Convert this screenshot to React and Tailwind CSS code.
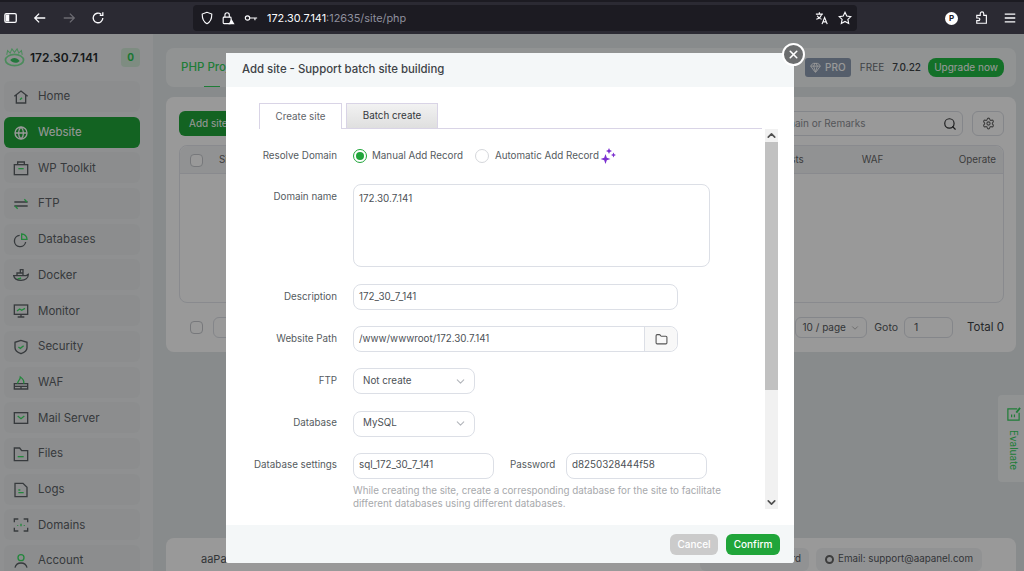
import { ChevronDown, ChevronUp, Folder, Search, Settings, Gem, X } from 'lucide-react'

const GREEN = '#3ce065'

// nav icons: dark outline with one green accent, same as the panel's own set
const NAV_ICONS = {
  Home: <><path d="M2 11 12 3l10 8M5 9v12h14V9" /><path d="m10.500 16 3-3" stroke={GREEN} /></>,
  Website: <><circle cx="12" cy="12" r="9" /><path d="M3 12h18M12 3c-5 5-5 13 0 18M12 3c5 5 5 13 0 18" /></>,
  'WP Toolkit': <><rect x="2" y="7" width="20" height="15" /><path d="M7 7V3h10v4" /><path d="M8 13h8" stroke={GREEN} /></>,
  FTP: <><path d="M2 9h20M2 15h20" /><path d="m17 5 4 4" stroke={GREEN} /><path d="m7 19-4-4" stroke={GREEN} /></>,
  Databases: <><path d="M10 5a8.500 8.500 0 1 0 9 10" /><path d="M13 3a8 8 0 0 1 8 8h-8z" stroke={GREEN} /></>,
  Docker: <><path d="M1 13h18c1 0 2-1 4-2 0 6-5 9-11 9-6 0-10-2-11-7z" /><path d="M6 13V9h5V4h4v9M11 9h4" /><path d="M7 17c2 1 4 0 5-1" stroke={GREEN} /></>,
  Monitor: <><rect x="2" y="3" width="20" height="14" /><path d="M12 17v4M7 21h10" /><path d="m6 12 4-3 3 2 5-3" stroke={GREEN} /></>,
  Security: <><path d="M12 2 3 5v8c0 4 4 7 9 9 5-2 9-5 9-9V5z" /><path d="m8 12 3 2 5-4" stroke={GREEN} /></>,
  WAF: <><path d="M2 13h20v8H2zM2 17h20M12 17v4" /><path d="M7 13c-1-4 4-5 4-10 3 2 6 6 5 10" stroke={GREEN} /></>,
  'Mail Server': <><rect x="2" y="4" width="20" height="16" /><path d="m7 9 5 4 5-4" stroke={GREEN} /></>,
  Files: <><path d="M2 3h8l3 4h9v15H2z" /><path d="M7 16h9" stroke={GREEN} /></>,
  Logs: <><path d="M3 2h12l6 6v14H3z" /><path d="M8 12h3M8 16h8" stroke={GREEN} /></>,
  Domains: <><path d="M2 8V3h6M16 3h6v5M22 16v5h-6M8 21H2v-5" /><path d="M7 12v1M12 10v4M17 12v1" stroke={GREEN} /></>,
  Account: <><path d="M3 22c1-4 4-7 9-7s8 3 9 7" /><circle cx="12" cy="7" r="4.500" stroke={GREEN} /></>,
}
const NAV = Object.keys(NAV_ICONS)

function NavIcon({ name, className }) {
  return (
    <svg viewBox="0 0 24 24" fill="none" stroke="currentColor" strokeWidth="2" className={className}>
      {NAV_ICONS[name]}
    </svg>
  )
}

function Sidebar() {
  return (
    <aside className="w-[153px] shrink-0 bg-[#eef1f2] pl-1 pr-[13px] flex flex-col">
      <div className="h-[47px] shrink-0 flex items-center">
        <svg viewBox="0 0 24 22" className="w-[21px] h-[19px] mr-[5px] shrink-0">
          <ellipse cx="12" cy="14" rx="10.500" ry="6.500" fill="none" stroke="#7fe89a" strokeWidth="2" />
          <path d="M7 14c3-4 8-3 11 1-3 3-8 3-11-1z" fill="#3cc765" />
          <path d="M3 8 4 3l3 3 2-5 3 4 3-4 2 5 3-3 1 5" fill="none" stroke="#7fe89a" strokeWidth="1.200" />
        </svg>
        <span className="text-[12px] font-semibold text-[#262a2e]">172.30.7.141</span>
        <span className="ml-auto w-[19px] h-[19px] rounded bg-[#d3ead8] text-[#2cc653] text-[10px] font-bold grid place-items-center">0</span>
      </div>
      <nav className="flex flex-col gap-[4.700px]">
        {NAV.map(name => (
          <div
            key={name}
            className={`h-[31px] shrink-0 rounded-md flex items-center pl-[9px] pt-[1px] gap-[9px] text-[11.500px] ${name === 'Website' ? 'bg-[#20a53a] text-white' : 'bg-[#e9eced] text-[#5c6166]'}`}
          >
            <NavIcon name={name} className="w-[16px] h-[16px] shrink-0" />
            {name}
          </div>
        ))}
      </nav>
    </aside>
  )
}

function Background() {
  return (
    <main className="flex-1 min-w-0 bg-[#e3e8e9] pt-[14px] pl-[13px] pr-[8px] flex flex-col">
      <div className="h-[39px] shrink-0 rounded-lg bg-[#f2f5f6] flex items-center pl-[15px] pr-[12px] text-[10px]">
        <span className="relative h-full flex items-center text-[#35d05c] font-medium text-[11.500px]">
          PHP Project
          <span className="absolute bottom-0 left-[23px] w-[16px] h-[1.500px] bg-[#35d05c]" />
        </span>
        <span className="ml-auto w-[46px] h-[19px] rounded-[3px] bg-[#8e9db2] text-white flex items-center justify-center gap-1 font-medium"><Gem size={11} />PRO</span>
        <span className="ml-[9px] text-[#6a6f74]">FREE</span>
        <span className="ml-[8px] text-[#3e4347] font-medium">7.0.22</span>
        <span className="ml-[7px] w-[76px] h-[19px] rounded-lg bg-[#20bb44] text-white grid place-items-center">Upgrade now</span>
      </div>

      <section className="mt-[10px] h-[255px] shrink-0 rounded-lg bg-white pl-[13px] pr-[12px] pt-[13px]">
        <div className="h-[26px] pt-[1px] flex items-center">
          <span className="w-[70px] h-[25px] rounded-md bg-[#20a53a] text-white text-[10px] pl-[10px] flex items-center">Add site</span>
          <div className="ml-auto w-[198px] h-[25px] rounded-md border border-[#dcdfe6] flex items-center justify-between pl-[7px] pr-[5px] text-[#8d9095] text-[10px]">
            <span>Domain or Remarks</span><Search size={14} className="text-[#303133]" />
          </div>
          <span className="ml-[9px] w-[32px] h-[25px] rounded-md border border-[#dcdfe6] grid place-items-center text-[#666]"><Settings size={13} /></span>
        </div>
        <div className="mt-[9px] h-[158px] rounded-lg border border-[#e4e7ed]">
          <div className="h-[28px] pt-[1px] bg-[#f2f4f6] rounded-t-lg border-b border-[#e4e7ed] flex items-center pl-[10px] pr-[7px] text-[9.800px] text-[#666]">
            <span className="w-[13px] h-[13px] border border-[#c6c9ce] rounded-sm bg-white" />
            <span className="ml-[16px]">Site name</span>
            <span className="ml-[496px]">Requests</span>
            <span className="ml-[58px]">WAF</span>
            <span className="ml-auto">Operate</span>
          </div>
        </div>
        <div className="mt-[14px] h-[21px] flex items-center text-[10.500px] text-[#55595d]">
          <span className="ml-[11px] w-[13px] h-[13px] border border-[#c6c9ce] rounded-sm" />
          <span className="ml-[10px] w-[60px] h-[21px] rounded-md border border-[#dcdfe6]" />
          <span className="ml-auto w-[72px] h-[21px] rounded-md border border-[#dcdfe6] flex items-center justify-center gap-1 text-[10px]">10 / page<ChevronDown size={10} className="text-[#aaa]" /></span>
          <span className="ml-[7px]">Goto</span>
          <span className="ml-[6px] w-[49px] h-[21px] rounded-md border border-[#dcdfe6] pl-[9px] flex items-center">1</span>
          <span className="ml-[14px] text-[11.500px] text-[#3e4347]">Total 0</span>
        </div>
      </section>

      <footer className="mt-[186px] h-[44px] shrink-0 rounded-t-lg bg-white flex items-center pl-[35px] pr-[34px] pb-[2px] text-[9.800px] text-[#55595d]">
        <span className="text-[11px]">aaPanel Linux</span>
        <span className="ml-auto rounded-md bg-[#f2f4f6] pl-[24px] pr-[8px] h-[23px] mr-[7px] flex items-center">Forum Password</span>
        <span className="rounded-md bg-[#f2f4f6] h-[23px] pl-[9px] pr-[9px] flex items-center gap-[4px]">
          <span className="w-[9px] h-[9px] rounded-full border-2 border-[#666]" />
          Email: support@aapanel.com
        </span>
      </footer>
    </main>
  )
}

function Field({ label, children }) {
  return (
    <div className="flex items-center">
      <span className="w-[111px] shrink-0 text-right text-[9.800px] text-[#555b60] mr-[16px]">{label}</span>
      {children}
    </div>
  )
}

function TextBox({ value, className }) {
  return (
    <div className={`h-[26px] rounded-lg border border-[#dcdfe6] flex items-center pl-[5px] text-[9.800px] text-[#4c5156] ${className}`}>{value}</div>
  )
}

function SelectBox({ value }) {
  return (
    <div className="w-[122px] h-[26px] rounded-lg border border-[#dcdfe6] flex items-center justify-between pl-[9px] pr-[7px] text-[9.800px] text-[#4c5156]">
      {value}<ChevronDown size={13} className="text-[#b3b6bb]" />
    </div>
  )
}

function Modal() {
  return (
    <div className="absolute left-[226px] top-[53px] w-[568px] h-[510px] bg-white rounded-[3px] flex flex-col">
      <div className="h-[34px] shrink-0 bg-[#f4f7f8] flex items-center pl-[16px] text-[11.400px] font-medium text-[#3e4347]">
        Add site - Support batch site building
      </div>

      <div className="pt-[16px] pl-[33px] pr-[32px] h-[42px] shrink-0">
        <div className="flex items-end h-[26px] gap-[4px] border-b border-[#d9d4e6]">
          <div className="w-[83px] h-[26px] -mb-px pt-[1px] bg-white border border-b-0 border-[#d9d4e6] grid place-items-center text-[9.800px] text-[#5f6469]">Create site</div>
          <div className="w-[92px] h-[26px] -mb-px pt-[1px] border border-[#d9d4e6] bg-gradient-to-b from-[#f2f2f2] to-[#dfdfdf] grid place-items-center text-[9.800px] text-[#33373b]">Batch create</div>
        </div>
      </div>

      <div className="flex-1 min-h-0 flex pr-[16px]">
        <div className="flex-1 min-w-0 overflow-hidden pt-[19px] flex flex-col">
          <Field label="Resolve Domain">
            <span className="w-[14px] h-[14px] rounded-full border border-[#20a53a] grid place-items-center"><span className="w-[8px] h-[8px] rounded-full bg-[#20a53a]" /></span>
            <span className="ml-[5px] text-[9.800px] text-[#555b60]">Manual Add Record</span>
            <span className="ml-[12px] w-[14px] h-[14px] rounded-full border border-[#d5d7db]" />
            <span className="ml-[6px] text-[9.800px] text-[#555b60]">Automatic Add Record</span>
            <svg viewBox="0 0 16 16" className="w-[16px] h-[16px] ml-[1px] fill-[#7b2fd0]">
              <path d="m5.500 6 1.300 3.700L10.500 11l-3.700 1.300L5.500 16l-1.300-3.700L.5 11l3.700-1.300zM9 0l.9 2.100L12 3l-2.100.9L9 6l-.9-2.100L6 3l2.100-.9zM13.500 4.500l.8 1.700L16 7l-1.700.8-.8 1.700-.8-1.700L11 7l1.700-.8z" />
            </svg>
          </Field>

          <div className="mt-[20px] flex items-start">
            <span className="w-[111px] shrink-0 text-right text-[9.800px] text-[#555b60] mr-[16px] mt-[6px]">Domain name</span>
            <div className="w-[357px] h-[83px] rounded-lg border border-[#dcdfe6] px-[5px] py-[7px] text-[9.800px] text-[#4c5156]">172.30.7.141</div>
          </div>

          <div className="mt-[17px] flex flex-col gap-[16.200px]">
            <Field label="Description"><TextBox value="172_30_7_141" className="w-[325px]" /></Field>
            <Field label="Website Path">
              <div className="w-[325px] h-[26px] rounded-lg border border-[#dcdfe6] flex items-center text-[9.800px] text-[#4c5156]">
                <span className="flex-1 pl-[5px]">/www/wwwroot/172.30.7.141</span>
                <span className="w-[33px] h-full border-l border-[#dcdfe6] bg-[#f8f8f8] rounded-r-lg grid place-items-center text-[#555]"><Folder size={13} /></span>
              </div>
            </Field>
            <Field label="FTP"><SelectBox value="Not create" /></Field>
            <Field label="Database"><SelectBox value="MySQL" /></Field>
            <Field label="Database settings">
              <TextBox value="sql_172_30_7_141" className="w-[141px]" />
              <span className="ml-[16px] w-[56px] shrink-0 text-[9.800px] text-[#555b60]">Password</span>
              <TextBox value="d8250328444f58" className="w-[141px]" />
            </Field>
          </div>

          <p className="mt-[5px] ml-[127px] w-[380px] text-[9.800px] leading-[13px] text-[#a7a9ac]">
            While creating the site, create a corresponding database for the site to facilitate different databases using different databases.
          </p>
        </div>

        <div className="w-[13px] shrink-0 bg-[#f1f1f1] flex flex-col text-[#505050]">
          <ChevronUp size={13} strokeWidth={3} className="shrink-0" />
          <div className="h-[248px] shrink-0 bg-[#c1c1c1]" />
          <ChevronDown size={13} strokeWidth={3} className="shrink-0 mt-auto" />
        </div>
      </div>

      <div className="mt-[16px] h-[38px] shrink-0 bg-[#f4f7f8] rounded-b-[3px] flex items-center justify-end gap-[8px] pr-[14px] text-[10px] font-medium text-white">
        <span className="w-[48px] h-[21px] rounded-md bg-[#cbcbcb] grid place-items-center">Cancel</span>
        <span className="w-[54px] h-[21px] rounded-md bg-[#20a53a] grid place-items-center">Confirm</span>
      </div>

      <span className="absolute -right-[11px] -top-[10px] w-[23px] h-[23px] rounded-full bg-[#6b6d6e] border-2 border-white grid place-items-center text-white">
        <X size={13} strokeWidth={3} />
      </span>
    </div>
  )
}

function BrowserBar() {
  return (
    <header className="h-[34px] shrink-0 bg-[#2b2a33] border-t-2 border-[#1c1b22] flex items-center text-[#fbfbfe]">
      <svg viewBox="0 0 16 16" className="ml-[4px] w-[14px] h-[14px]" fill="none" stroke="currentColor" strokeWidth="1.500">
        <rect x="1" y="3" width="13" height="10" rx="1.500" /><rect x="2" y="4" width="4" height="8" fill="currentColor" stroke="none" />
      </svg>
      <svg viewBox="0 0 16 16" className="ml-[15px] w-[14px] h-[14px]" fill="none" stroke="currentColor" strokeWidth="1.500"><path d="M14 8H2.500M7 3 2 8l5 5" /></svg>
      <svg viewBox="0 0 16 16" className="ml-[15px] w-[14px] h-[14px] text-[#6c6b72]" fill="none" stroke="currentColor" strokeWidth="1.500"><path d="M2 8h11.500M9 3l5 5-5 5" /></svg>
      <svg viewBox="0 0 16 16" className="ml-[15px] w-[14px] h-[14px]" fill="none" stroke="currentColor" strokeWidth="1.500"><path d="M13.500 8A5.500 5.500 0 1 1 11.500 3.700M13.500 1.500v3.500H10" /></svg>

      <div className="ml-[88px] w-[664px] h-[26px] rounded-[4px] bg-[#1c1b22] flex items-center pl-[7px] pr-[5px]">
        <svg viewBox="0 0 16 16" className="w-[14px] h-[14px]" fill="none" stroke="currentColor" strokeWidth="1.300"><path d="M8 1.500 2.500 3.500c0 5 1 9 5.500 11 4.500-2 5.500-6 5.500-11z" /></svg>
        <svg viewBox="0 0 16 16" className="ml-[7px] w-[14px] h-[14px]" fill="none" stroke="currentColor" strokeWidth="1.300"><rect x="2.500" y="7" width="9" height="7.500" rx="1" /><path d="M4.500 7V4.500a2.500 2.500 0 0 1 5 0V7" /><path d="m12 9 3.500 6h-7z" fill="currentColor" stroke="none" /></svg>
        <svg viewBox="0 0 16 16" className="ml-[9px] w-[14px] h-[14px]" fill="none" stroke="currentColor" strokeWidth="1.300"><circle cx="4" cy="8" r="2.500" /><path d="M6.500 8H15M12.500 8v2.500" /></svg>
        <span className="ml-[9px] text-[10.900px]">
          172.30.7.141<span className="text-[#8f8f9d]">:12635/site/php</span>
        </span>
        <svg viewBox="0 0 16 16" className="ml-auto w-[14px] h-[14px]" fill="none" stroke="currentColor" strokeWidth="1.300"><path d="M1 3.500h8M5 1.500v2M7.500 3.500C7 6.500 4.500 8.500 1.500 9.500M2.500 5.500c1 2 3 3.500 5 4M8 15l3-7.500L14 15M9 12.500h4.500" /></svg>
        <svg viewBox="0 0 16 16" className="ml-[9px] w-[14px] h-[14px]" fill="none" stroke="currentColor" strokeWidth="1.300"><path d="m8 1.500 2 4.300 4.700.6-3.400 3.200.9 4.700L8 12l-4.200 2.300.9-4.700L1.300 6.400 6 5.800z" /></svg>
      </div>

      <span className="ml-[88px] w-[13px] h-[13px] rounded-full bg-white text-[#1c1b22] text-[8px] font-bold grid place-items-center">P</span>
      <svg viewBox="0 0 16 16" className="ml-[17px] w-[14px] h-[14px]" fill="none" stroke="currentColor" strokeWidth="1.300"><path d="M2 5h4V3a2 2 0 0 1 4 0v2h3v9H2v-3h2a1.500 1.500 0 0 0 0-3H2z" /></svg>
      <svg viewBox="0 0 16 16" className="ml-[14px] w-[14px] h-[14px]" fill="none" stroke="currentColor" strokeWidth="1.500"><path d="M2 3.500h12M2 8h12M2 12.500h12" /></svg>
    </header>
  )
}

export default function App() {
  return (
    <div className="relative w-[1024px] h-[571px] overflow-hidden flex flex-col font-['Inter',sans-serif]">
      <BrowserBar />
      <div className="relative flex-1 min-h-0 flex">
        <Sidebar />
        <Background />
        <div className="absolute right-0 top-[361px] w-[26px] h-[87px] rounded-l bg-[#f2f5f6] flex flex-col items-center pt-[12px] pl-[4px] text-[#35d05c]">
          <svg viewBox="0 0 16 16" className="w-[15px] h-[15px]" fill="none" stroke="currentColor" strokeWidth="1.300"><path d="M12 2H2v12h12V6M6 8v3M9 8v3" /><path d="m15 1-4 5" strokeWidth="2" /></svg>
          <span className="mt-[8px] text-[10px] [writing-mode:vertical-rl]">Evaluate</span>
        </div>
        <div className="absolute inset-0 bg-black/40" />
      </div>
      <Modal />
    </div>
  )
}
